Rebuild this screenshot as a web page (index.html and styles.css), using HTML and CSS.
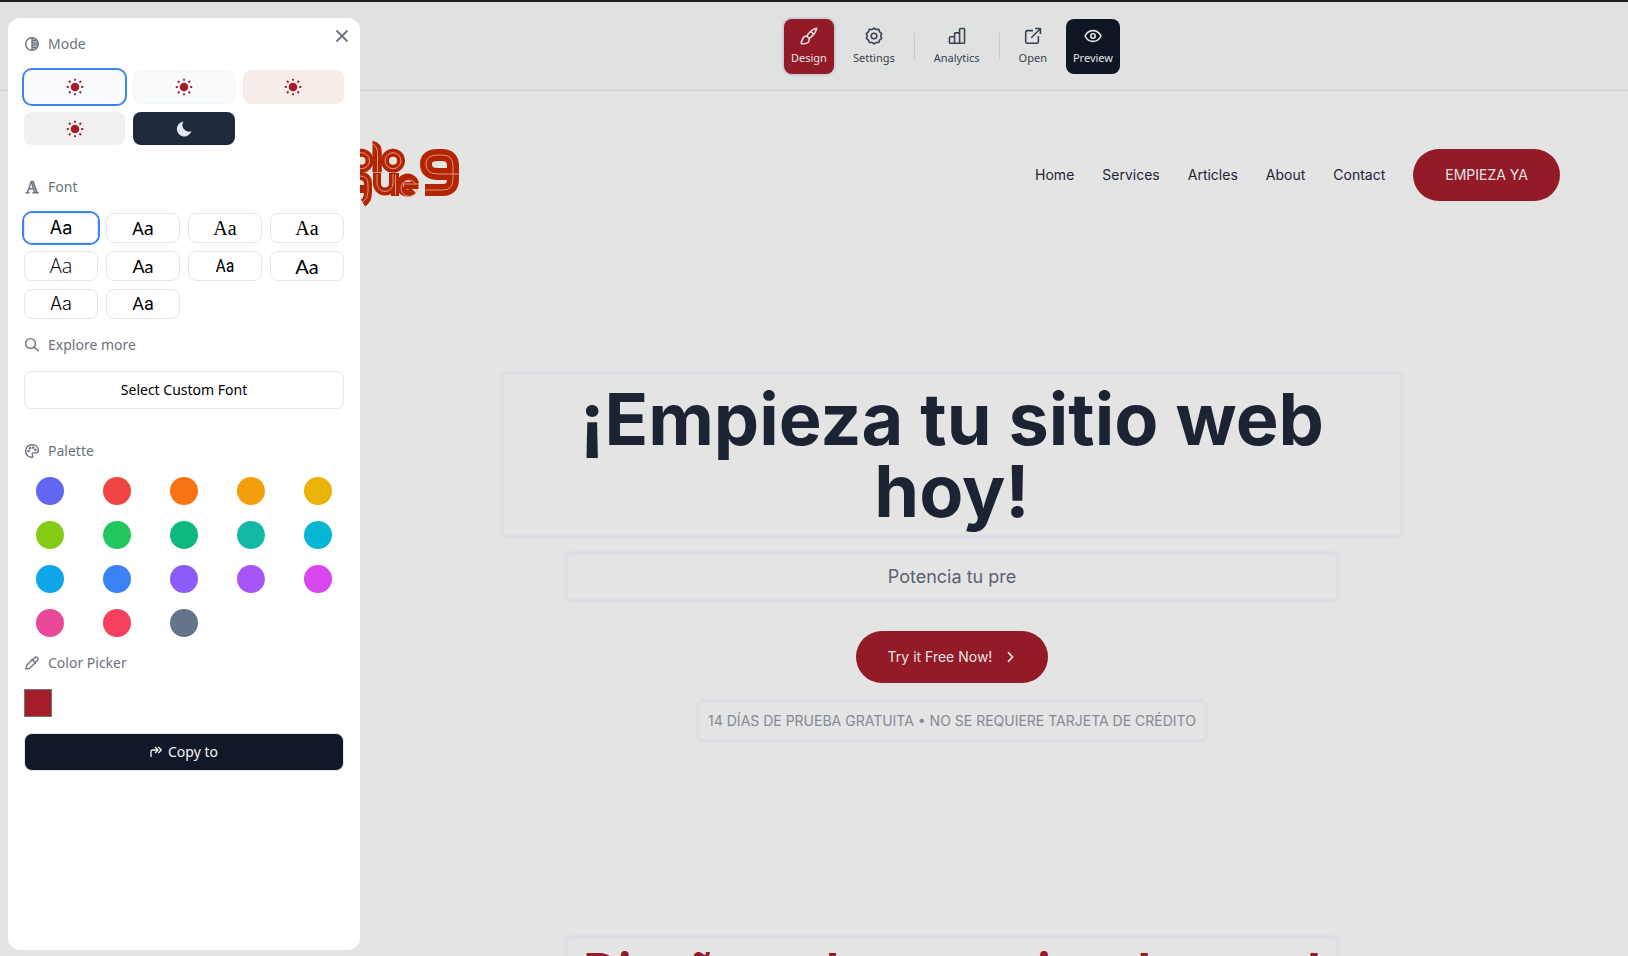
FILE: index.html
```
<!DOCTYPE html>
<html lang="es">
<head>
    <meta charset="UTF-8">
    <meta name="viewport" content="width=device-width, initial-scale=1.0">
    <title>Site Editor</title>
    <link rel="stylesheet" href="styles.css">
</head>
<body>
    <svg class="sprite" aria-hidden="true">
        <symbol id="sun" viewBox="0 0 18 18">
            <circle cx="9" cy="9" r="4.3" fill="currentColor"/>
            <path d="M9 .8v2M9 15.200v2M.8 9h2M15.200 9h2M3 3l1.500 1.500M13.500 13.500l1.500 1.500M3 15l1.500-1.500M13.500 4.500 15 3" stroke="currentColor" stroke-width="1.8"/>
        </symbol>
    </svg>

    <div class="topline"></div>

    <main class="page">
        <header class="toolbar">
            <button class="tool tool-active">
                <svg viewBox="0 0 16 16" class="tool-icon"><path d="M14.800 1.200C12 1.800 8.500 4.500 6 8l2.200 2.200c3.400-2.400 6-6 6.600-9zM9.800 4.200l2.200 2.200M6 8 4 8.400C2.200 9 2.600 11.500 1.200 13v1.800c2 .2 5 .2 6.200-1.200.9-1.100.8-2.300.8-3.400"/></svg>
                <span>Design</span>
            </button>
            <button class="tool">
                <svg viewBox="0 0 16 16" class="tool-icon"><path d="M8 .9l1.900 1.400 2.300-.2.700 2.200 1.900 1.400-.8 2.300.8 2.200-1.900 1.400-.7 2.200-2.300-.1L8 15.100l-1.900-1.400-2.300.1-.7-2.200-1.900-1.400L2 8l-.8-2.300 1.900-1.400.7-2.200 2.300.2z"/><circle cx="8" cy="8" r="2.500"/></svg>
                <span>Settings</span>
            </button>
            <span class="separator"></span>
            <button class="tool">
                <svg viewBox="0 0 16 16" class="tool-icon"><path d="M1.300 14.500v-5q0-.8.8-.8h3.700v5.800M5.800 14.500V6q0-.8.8-.8h3.700v9.300M10.300 14.500V2.200q0-.8.8-.8h2.800q.8 0 .8.800v11.500q0 .8-.8.8H2.100q-.8 0-.8-.8"/></svg>
                <span>Analytics</span>
            </button>
            <span class="separator"></span>
            <button class="tool">
                <svg viewBox="0 0 16 16" class="tool-icon"><path d="M8 3.200H2.800q-1.300 0-1.300 1.300v8.700q0 1.300 1.300 1.300h8.700q1.300 0 1.300-1.300V8M6.500 9.500l8-8M9.800 1.400h4.800v4.800"/></svg>
                <span>Open</span>
            </button>
            <button class="tool tool-dark">
                <svg viewBox="0 0 16 16" class="tool-icon"><path d="M.9 8C2.500 4.800 5 3.200 8 3.200S13.500 4.800 15.100 8c-1.600 3.200-4.100 4.800-7.100 4.800S2.500 11.200.9 8z"/><circle cx="8" cy="8" r="2"/></svg>
                <span>Preview</span>
            </button>
        </header>

        <div class="site-header">
            <a href="#" class="logo" aria-label="Inicio">
                <svg viewBox="0 0 115 72" width="115" height="72" fill="none">
                    <g stroke="#b32400" stroke-width="8">
                        <circle cx="17.500" cy="21.700" r="8"/>
                        <circle cx="49" cy="21.700" r="8"/>
                        <path d="M28.500 1.500Q37.800 4 37.800 13V34H28.500z" fill="#b32400" stroke="none"/>
                        <path d="M33 33v11.500a8 8 0 0 0 16 0V34M51 34v23"/>
                        <path d="M12 37h4q8 0 8 8v8q0 8-5 11M12 50h8"/>
                        <path d="M60 46.500h14.500M71.500 44.500a8 8 0 1 0-2 7" stroke-width="7"/>
                        <path d="M109 35H94q-12 0-12-10 0-9 12-9h4q11 0 11 11v13q0 11-10 11H81" stroke-width="12"/>
                    </g>
                    <g stroke="#e7a294" stroke-width=".9">
                        <circle cx="17.500" cy="21.700" r="8"/>
                        <circle cx="49" cy="21.700" r="8"/>
                        <path d="M29 5q4.500 3 4.500 9v19M28 33.500h10M33 35v9.500a8 8 0 0 0 16 0V35M51.500 36v20"/>
                        <path d="M16 37q8 0 8 8v8q0 6-5 10"/>
                        <path d="M60 45h14M71.500 44.500a8 8 0 1 0 1.500 5.500"/>
                        <path d="M115 35H94q-12 0-12-10 0-9 12-9h4q11 0 11 11v13q0 11-10 11H81"/>
                    </g>
                </svg>
            </a>
            <nav class="site-nav">
                <a href="#">Home</a>
                <a href="#">Services</a>
                <a href="#">Articles</a>
                <a href="#">About</a>
                <a href="#">Contact</a>
                <a href="#" class="pill">EMPIEZA YA</a>
            </nav>
        </div>

        <section class="hero">
            <h1 class="editable hero-title">¡Empieza tu sitio web hoy!</h1>
            <p class="editable hero-text">Potencia tu pre</p>
            <a href="#" class="pill">Try it Free Now!
                <svg viewBox="0 0 12 12" width="12" height="12"><path d="M4 1.200 8.500 6 4 10.800" fill="none" stroke="currentColor" stroke-width="1.700"/></svg>
            </a>
            <p class="editable hero-note">14 DÍAS DE PRUEBA GRATUITA • NO SE REQUIERE TARJETA DE CRÉDITO</p>
        </section>

        <section class="features">
            <h2 class="editable features-title">Diseño web excepcional para el</h2>
        </section>
    </main>

    <aside class="panel">
        <button class="close" aria-label="Close">
            <svg viewBox="0 0 14 14" width="14" height="14"><path d="M1.500 1.500l11 11M12.500 1.500l-11 11" stroke="currentColor" stroke-width="1.800"/></svg>
        </button>

        <h3 class="label">
            <svg viewBox="0 0 16 16" class="label-icon"><circle cx="8" cy="8" r="6.300"/><path d="M8 1.700v12.600M8 4.200h4.500M8 6.100h6M8 8h6.200M8 9.900h6M8 11.800h4.500"/></svg>
            Mode
        </h3>
        <div class="modes">
            <button class="mode mode-white selected" aria-label="White"><svg width="18" height="18"><use href="#sun"/></svg></button>
            <button class="mode mode-light" aria-label="Light"><svg width="18" height="18"><use href="#sun"/></svg></button>
            <button class="mode mode-warm" aria-label="Warm"><svg width="18" height="18"><use href="#sun"/></svg></button>
            <button class="mode mode-gray" aria-label="Gray"><svg width="18" height="18"><use href="#sun"/></svg></button>
            <button class="mode mode-dark" aria-label="Dark"><svg viewBox="0 0 18 18" width="18" height="18"><path d="M8.500 1.500A7.500 7.500 0 1 0 16.500 11 6.500 6.500 0 0 1 8.500 1.500z" fill="currentColor"/></svg></button>
        </div>

        <h3 class="label">
            <svg viewBox="0 0 16 16" class="label-icon"><path d="M1.500 13.700h4M8.500 13.700h6.200M3.400 13.500 7.300 2.500h1.800l3.900 11M7.500 3l3 10.500M5 9.700h4.200M9.500 4l3 9.500"/></svg>
            Font
        </h3>
        <div class="fonts">
            <button class="font font-inter selected">Aa</button>
            <button class="font font-noto">Aa</button>
            <button class="font font-serif">Aa</button>
            <button class="font font-serif">Aa</button>
            <button class="font font-open">Aa</button>
            <button class="font font-lato">Aa</button>
            <button class="font font-narrow">Aa</button>
            <button class="font font-round">Aa</button>
            <button class="font font-thin">Aa</button>
            <button class="font font-roboto">Aa</button>
        </div>

        <h3 class="label">
            <svg viewBox="0 0 16 16" class="label-icon"><circle cx="6.500" cy="6.500" r="4.900"/><path d="M10 10l4.700 4.300"/></svg>
            Explore more
        </h3>
        <button class="btn">Select Custom Font</button>

        <h3 class="label label-palette">
            <svg viewBox="0 0 16 16" class="label-icon"><path d="M8.500 14.300C4 14.600 1.600 11.400 1.600 8A6.400 6.400 0 0 1 8 1.700c3.700 0 6.400 2.200 6.400 5.200 0 2-1.400 3-3.200 3H9.500c-1.600 0-1.700 1.300-1 2.200.5.800.7 1.600 0 2.200z"/><circle cx="4.600" cy="8" r=".6"/><circle cx="6" cy="5.300" r=".6"/><circle cx="9" cy="4.600" r=".6"/><circle cx="11.400" cy="6.800" r=".6"/></svg>
            Palette
        </h3>
        <div class="palette">
            <button class="swatch indigo" aria-label="Indigo"></button>
            <button class="swatch red" aria-label="Red"></button>
            <button class="swatch orange" aria-label="Orange"></button>
            <button class="swatch amber" aria-label="Amber"></button>
            <button class="swatch yellow" aria-label="Yellow"></button>
            <button class="swatch lime" aria-label="Lime"></button>
            <button class="swatch green" aria-label="Green"></button>
            <button class="swatch emerald" aria-label="Emerald"></button>
            <button class="swatch teal" aria-label="Teal"></button>
            <button class="swatch cyan" aria-label="Cyan"></button>
            <button class="swatch sky" aria-label="Sky"></button>
            <button class="swatch blue" aria-label="Blue"></button>
            <button class="swatch violet" aria-label="Violet"></button>
            <button class="swatch purple" aria-label="Purple"></button>
            <button class="swatch fuchsia" aria-label="Fuchsia"></button>
            <button class="swatch pink" aria-label="Pink"></button>
            <button class="swatch rose" aria-label="Rose"></button>
            <button class="swatch slate" aria-label="Slate"></button>
        </div>

        <label class="label" for="color">
            <svg viewBox="0 0 16 16" class="label-icon"><path d="M8.300 4.700 3.200 9.800Q2.500 10.500 2.400 12L2 13.800h2q1.300 0 2-.8l5.300-5.300M7.500 3.900l4.600 4.600M8.700 4.700l2-2q1.200-1.200 2.600-.2 1.400 1.300.2 2.700l-2.200 2.200"/></svg>
            Color Picker
        </label>
        <input type="color" id="color" class="color-input" value="#a51c2b">

        <button class="btn btn-dark">
            <svg viewBox="0 0 12 12" width="12" height="12"><path d="M1 11V5.500Q1 4 2.500 4H7M5 1l3 3-3 3M8.300 1l3 3-3 3" fill="none" stroke="currentColor" stroke-width="1.300"/></svg>
            Copy to
        </button>
    </aside>
</body>
</html>
```

FILE: styles.css
```
* {
    box-sizing: border-box;
}

body {
    margin: 0;
    height: 100vh;
    overflow: hidden;
    background: #e4e4e4;
    color: #1c2434;
    font-family: Inter, sans-serif;
    font-size: 14px;
    line-height: 20px;
}

h1, h2, h3, p {
    margin: 0;
}

a {
    color: inherit;
    text-decoration: none;
}

button {
    font: inherit;
    color: inherit;
    border: none;
    padding: 0;
    background: none;
    cursor: pointer;
}

.sprite {
    display: none;
}

.topline {
    height: 2px;
    background: #222;
}

/* Top toolbar */
.toolbar {
    display: flex;
    justify-content: center;
    align-items: center;
    gap: 12px;
    height: 89px;
    padding: 1px 0 0 276px;
    background: #e0e2e1;
    border-bottom: 1px solid #cdcfce;
    font-family: "Noto Sans", sans-serif;
    font-size: 11px;
    line-height: 16px;
    color: #374151;
}

.tool {
    display: flex;
    flex-direction: column;
    align-items: center;
    gap: 5px;
    height: 55px;
    padding: 8px 7px;
    border-radius: 8px;
}

.tool-icon {
    width: 18px;
    height: 18px;
    fill: none;
    stroke: currentColor;
    stroke-width: 1.4;
    stroke-linejoin: round;
}

.tool-active {
    background: #931a27;
    color: #e4e4e4;
    box-shadow: 0 0 0 2px #c9cedb;
}

.tool-dark {
    background: #0f1623;
    color: #e4e4e4;
}

.separator {
    width: 1px;
    height: 27px;
    background: #c7cacd;
}

/* Site preview */
.site-header {
    display: flex;
    justify-content: space-between;
    align-items: center;
    padding: 48px 68px 0 344px;
}

.logo svg {
    display: block;
}

.site-nav {
    display: flex;
    align-items: center;
    gap: 28px;
}

.pill {
    display: inline-flex;
    align-items: center;
    gap: 12px;
    height: 52px;
    padding: 0 32px;
    border-radius: 26px;
    background: #931a27;
    color: #e4e4e4;
}

.hero,
.features {
    display: flex;
    flex-direction: column;
    align-items: center;
    padding-left: 276px;
}

.hero {
    padding-top: 164px;
}

.editable {
    padding: 8px;
    border-radius: 4px;
    box-shadow: 0 0 0 4px #dddde4;
    text-align: center;
}

.hero-title {
    width: 100%;
    max-width: 896px;
    font-size: 72px;
    line-height: 72px;
    font-weight: 700;
}

.hero-text {
    width: 100%;
    max-width: 768px;
    margin: 20px 0 32px;
    font-size: 18px;
    line-height: 28px;
    color: #5b6270;
}

.hero-note {
    margin-top: 20px;
    color: #858a94;
}

.features {
    padding-top: 200px;
}

.features-title {
    width: 100%;
    max-width: 768px;
    font-size: 48px;
    line-height: 48px;
    font-weight: 700;
    color: #931a27;
    white-space: nowrap;
}

/* Design panel */
.panel {
    position: fixed;
    top: 18px;
    bottom: 6px;
    left: 8px;
    width: 352px;
    padding: 16px;
    border-radius: 12px;
    background: #fff;
    font-family: "Noto Sans", sans-serif;
}

.close {
    position: absolute;
    top: 11px;
    right: 11px;
    display: flex;
    color: #6b7280;
}

.label {
    display: flex;
    align-items: center;
    gap: 8px;
    margin-bottom: 16px;
    font-size: 14px;
    line-height: 20px;
    font-weight: 400;
    color: #6b7280;
}

.label-icon {
    width: 16px;
    height: 16px;
    fill: none;
    stroke: currentColor;
    stroke-width: 1.4;
}

.modes {
    display: grid;
    grid-template-columns: repeat(3, 1fr);
    grid-template-rows: 34px 33px;
    gap: 8px;
    margin-bottom: 32px;
}

.mode {
    display: flex;
    justify-content: center;
    align-items: center;
    border-radius: 8px;
    color: #a51c2b;
}

.mode-white {
    background: #fafcff;
}

.mode-light {
    background: #f8fafc;
    border: 1px solid #f1f5f9;
}

.mode-warm {
    background: #f7ede8;
}

.mode-gray {
    background: #f0f0f0;
}

.mode-dark {
    background: #1e293b;
    color: #e2e8f0;
}

.modes .selected,
.fonts .selected {
    box-shadow: 0 0 0 2px #3b82f6;
}

.fonts {
    display: grid;
    grid-template-columns: repeat(4, 1fr);
    gap: 8px;
    margin-bottom: 16px;
}

.font {
    height: 30px;
    border: 1px solid #e5e7eb;
    border-radius: 8px;
    font-size: 18px;
    line-height: 28px;
    color: #000;
}

.font-inter {
    font-family: Inter, sans-serif;
}

.font-noto {
    font-family: "Noto Sans", sans-serif;
}

.font-serif {
    font-family: "Liberation Serif", serif;
    font-size: 20px;
}

.font-open {
    font-family: "Open Sans", sans-serif;
    font-size: 20px;
    font-weight: 300;
}

.font-lato {
    font-family: Lato, sans-serif;
}

.font-narrow {
    font-family: "Liberation Sans Narrow", "Roboto Condensed", Roboto, sans-serif;
}

.font-round {
    font-family: Lato, sans-serif;
    font-size: 20px;
}

.font-thin {
    font-family: Inter, sans-serif;
    font-weight: 300;
}

.font-roboto {
    font-family: Roboto, sans-serif;
}

.btn {
    display: flex;
    justify-content: center;
    align-items: center;
    gap: 6px;
    width: 100%;
    height: 38px;
    border: 1px solid #e5e7eb;
    border-radius: 8px;
    color: #000;
}

.btn-dark {
    background: #111827;
    color: #f3f4f6;
}

.label-palette {
    margin-top: 32px;
}

.palette {
    display: grid;
    grid-template-columns: repeat(5, 1fr);
    justify-items: center;
    gap: 16px;
    margin-bottom: 16px;
}

.swatch {
    width: 28px;
    height: 28px;
    border-radius: 50%;
}

.indigo { background: #6366f1; }
.red { background: #ef4444; }
.orange { background: #f97316; }
.amber { background: #f59e0b; }
.yellow { background: #eab308; }
.lime { background: #84cc16; }
.green { background: #22c55e; }
.emerald { background: #10b981; }
.teal { background: #14b8a6; }
.cyan { background: #06b6d4; }
.sky { background: #0ea5e9; }
.blue { background: #3b82f6; }
.violet { background: #8b5cf6; }
.purple { background: #a855f7; }
.fuchsia { background: #d946ef; }
.pink { background: #ec4899; }
.rose { background: #f43f5e; }
.slate { background: #64748b; }

.color-input {
    display: block;
    width: 28px;
    height: 28px;
    margin-bottom: 16px;
    padding: 0;
    border: none;
    background: none;
}

.color-input::-webkit-color-swatch-wrapper {
    padding: 0;
}

.color-input::-webkit-color-swatch {
    border: 1px solid #777;
}
```
